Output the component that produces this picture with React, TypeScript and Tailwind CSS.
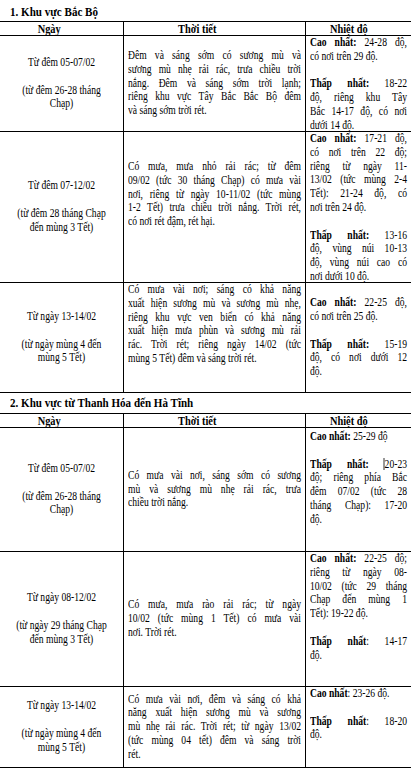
import type { ReactNode } from "react"

type Para = ReactNode[]

type Cell = {
  paras: Para[]
  align: "center" | "justify"
  valign?: "top" | "middle"
  pad?: string
}

type Row = {
  height: string
  cells: [Cell, Cell, Cell]
}

const B = ({ children }: { children: ReactNode }) => <span className="font-bold">{children}</span>

const Caret = () => <span className="inline-block w-px h-[12px] bg-black align-[-2px]" />

const day = (a: string, b: string[]): Cell => ({ paras: [[a], b], align: "center", valign: "middle" })

const region1: Row[] = [
  {
    height: "h-[96px]",
    cells: [
      day("Từ đêm 05-07/02", ["(từ đêm 26-28 tháng", "Chạp)"]),
      {
        align: "justify",
        valign: "middle",
        paras: [
          [
            "Đêm và sáng sớm có sương mù và",
            "sương mù nhẹ rải rác, trưa chiều trời",
            "nắng. Đêm và sáng sớm trời lạnh;",
            "riêng khu vực Tây Bắc Bắc Bộ đêm",
            "và sáng sớm trời rét.",
          ],
        ],
      },
      {
        align: "justify",
        paras: [
          [<><B>Cao nhất:</B> 24-28 độ,</>, "có nơi trên 29 độ."],
          [<><B>Thấp nhất:</B> 18-22</>, "độ, riêng khu Tây", "Bắc 14-17 độ, có nơi", "dưới 14 độ."],
        ],
      },
    ],
  },
  {
    height: "h-[151px]",
    cells: [
      day("Từ đêm 07-12/02", ["(từ đêm 28 tháng Chạp", "đến mùng 3 Tết)"]),
      {
        align: "justify",
        pad: "pt-[28px]",
        paras: [
          [
            "Có mưa, mưa nhỏ rải rác; từ đêm",
            "09/02 (tức 30 tháng Chạp) có mưa vài",
            "nơi, riêng từ ngày 10-11/02 (tức mùng",
            "1-2 Tết) trưa chiều trời nắng. Trời rét,",
            "có nơi rét đậm, rét hại.",
          ],
        ],
      },
      {
        align: "justify",
        paras: [
          [
            <><B>Cao nhất:</B> 17-21 độ,</>,
            "có nơi trên 22 độ;",
            "riêng từ ngày 11-",
            "13/02 (tức mùng 2-4",
            "Tết): 21-24 độ, có",
            "nơi trên 24 độ.",
          ],
          [<><B>Thấp nhất:</B> 13-16</>, "độ, vùng núi 10-13", "độ, vùng núi cao có", "nơi dưới 10 độ."],
        ],
      },
    ],
  },
  {
    height: "h-[110px]",
    cells: [
      day("Từ ngày 13-14/02", ["(từ ngày mùng 4 đến", "mùng 5 Tết)"]),
      {
        align: "justify",
        paras: [
          [
            "Có mưa vài nơi; sáng có khả năng",
            "xuất hiện sương mù và sương mù nhẹ,",
            "riêng khu vực ven biển có khả năng",
            "xuất hiện mưa phùn và sương mù rải",
            "rác. Trời rét; riêng ngày 14/02 (tức",
            "mùng 5 Tết) đêm và sáng trời rét.",
          ],
        ],
      },
      {
        align: "justify",
        valign: "middle",
        paras: [
          [<><B>Cao nhất:</B> 22-25 độ,</>, "có nơi trên 25 độ."],
          [<><B>Thấp nhất:</B> 15-19</>, "độ, có nơi dưới 12", "độ."],
        ],
      },
    ],
  },
]

const region2: Row[] = [
  {
    height: "h-[124px]",
    cells: [
      day("Từ đêm 05-07/02", ["(từ đêm 26-28 tháng", "Chạp)"]),
      {
        align: "justify",
        valign: "middle",
        paras: [["Có mưa vài nơi, sáng sớm có sương", "mù và sương mù nhẹ rải rác, trưa", "chiều trời nắng."]],
      },
      {
        align: "justify",
        pad: "pt-[2px]",
        paras: [
          [<><B>Cao nhất:</B> 25-29 độ</>],
          [
            <><B>Thấp nhất:</B> <Caret />20-23</>,
            "độ; riêng phía Bắc",
            "đêm 07/02 (tức 28",
            "tháng Chạp): 17-20",
            "độ.",
          ],
        ],
      },
    ],
  },
  {
    height: "h-[135px]",
    cells: [
      day("Từ ngày 08-12/02", ["(từ ngày 29 tháng Chạp", "đến mùng 3 Tết)"]),
      {
        align: "justify",
        valign: "middle",
        paras: [["Có mưa, mưa rào rải rác; từ ngày", "10/02 (tức mùng 1 Tết) có mưa vài", "nơi. Trời rét."]],
      },
      {
        align: "justify",
        paras: [
          [
            <><B>Cao nhất:</B> 22-25 độ;</>,
            "riêng từ ngày 08-",
            "10/02 (tức 29 tháng",
            "Chạp đến mùng 1",
            "Tết): 19-22 độ.",
          ],
          [<><B>Thấp nhất</B>: 14-17</>, "độ."],
        ],
      },
    ],
  },
  {
    height: "h-[81px]",
    cells: [
      day("Từ ngày 13-14/02", ["(từ ngày mùng 4 đến", "mùng 5 Tết)"]),
      {
        align: "justify",
        valign: "middle",
        paras: [
          [
            "Có mưa vài nơi, đêm và sáng có khả",
            "năng xuất hiện sương mù và sương",
            "mù nhẹ rải rác. Trời rét; từ ngày 13/02",
            "(tức mùng 04 tết) đêm và sáng trời",
            "rét.",
          ],
        ],
      },
      {
        align: "justify",
        paras: [[<><B>Cao nhất</B>: 23-26 độ.</>], [<><B>Thấp nhất</B>: 18-20</>, "độ."]],
      },
    ],
  },
]

const colWidths = ["w-[124px] border-r border-black", "w-[182px] border-r border-black px-[4px]", "w-[108px] pl-[4px] pr-[7px]"]

function CellBody({ cell }: { cell: Cell }) {
  return (
    <div className="w-[125%] origin-left scale-x-[0.8]">
      {cell.paras.map((para, p) => (
        <div key={p} className={p > 0 ? "mt-[13.8px]" : ""}>
          {para.map((line, i) => {
            const last = i === para.length - 1
            const cls =
              cell.align === "center"
                ? "text-center"
                : last
                  ? "text-left"
                  : "text-justify [text-align-last:justify]"
            return (
              <div key={i} className={cls}>
                {line}
              </div>
            )
          })}
        </div>
      ))}
    </div>
  )
}

function Table({ rows }: { rows: Row[] }) {
  return (
    <div className="w-[414px] border-t border-black">
      <div className="flex h-[14px] border-b border-black font-bold text-[13px] leading-[13px]">
        {["Ngày", "Thời tiết", "Nhiệt độ"].map((h, i) => (
          <div key={h} className={`${colWidths[i]} flex items-center`}>
            <div className="w-[125%] origin-left scale-x-[0.8] text-center">{h}</div>
          </div>
        ))}
      </div>
      {rows.map((row, r) => (
        <div key={r} className={`flex border-b border-black ${row.height}`}>
          {row.cells.map((cell, c) => (
            <div
              key={c}
              className={`${colWidths[c]} flex flex-col ${cell.valign === "middle" ? "justify-center" : "justify-start"} ${cell.pad ?? ""}`}
            >
              <CellBody cell={cell} />
            </div>
          ))}
        </div>
      ))}
    </div>
  )
}

export default function App() {
  return (
    <div
      className="w-[411px] h-[775px] overflow-hidden bg-white text-black text-[12px] leading-[13.8px]"
      style={{ fontFamily: '"Liberation Serif", "Times New Roman", serif' }}
    >
      <div className="h-[21px] pt-[4px] pl-[10px]">
        <div className="origin-left scale-x-[0.85] font-bold text-[13px] leading-[16px] whitespace-nowrap">1. Khu vực Bắc Bộ</div>
      </div>
      <Table rows={region1} />
      <div className="h-[20px] pt-[2px] pl-[10px]">
        <div className="origin-left scale-x-[0.85] font-bold text-[13px] leading-[16px] whitespace-nowrap">
          2. Khu vực từ Thanh Hóa đến Hà Tĩnh
        </div>
      </div>
      <Table rows={region2} />
    </div>
  )
}
